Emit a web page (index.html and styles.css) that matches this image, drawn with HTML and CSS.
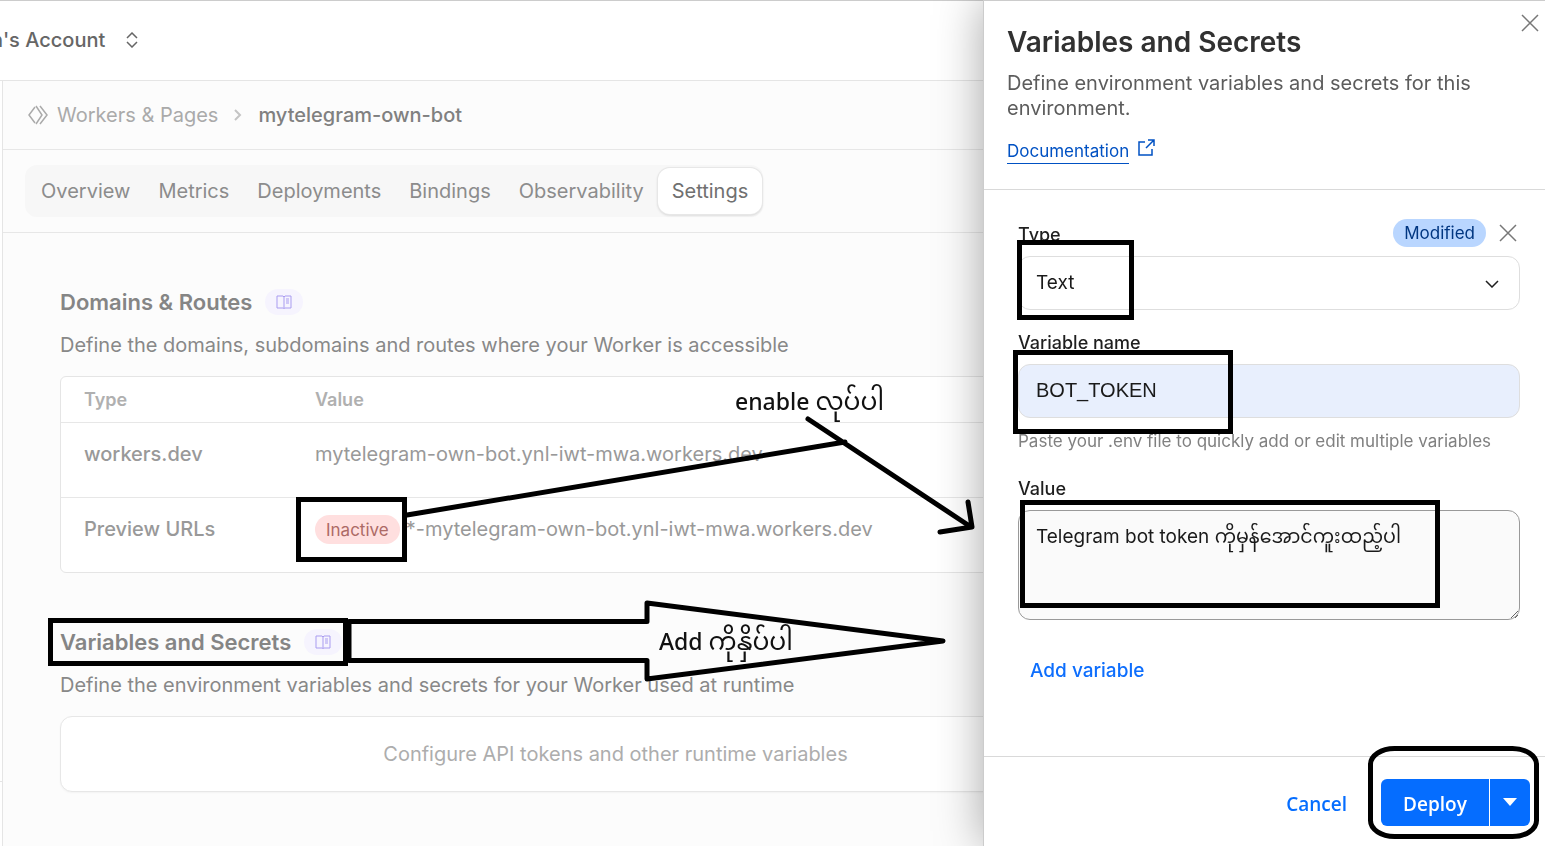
FILE: index.html
```html
<!DOCTYPE html>
<html lang="en">
<head>
    <meta charset="utf-8">
    <title>Variables and Secrets</title>
    <link rel="stylesheet" href="styles.css">
</head>
<body>
    <div class="page">
        <header class="topbar">
            <button class="account">n's Account
                <svg width="14" height="16" viewBox="0 0 14 16"><path d="M2 6l5-5 5 5M2 10l5 5 5-5"/></svg>
            </button>
        </header>

        <div class="shell">
            <aside class="sidebar"><div class="sidebar-foot"></div></aside>
            <main class="main">
                <nav class="breadcrumb">
                    <a href="#">
                        <svg class="workers-icon" width="20" height="20" viewBox="0 0 20 20"><path d="M7 2L1 10l6 8M8 1l6 9-6 9M12 1l7 9-7 9"/></svg>
                        Workers &amp; Pages
                    </a>
                    <svg class="sep" width="8" height="12" viewBox="0 0 8 12"><path d="M1 1l5 5-5 5"/></svg>
                    <span class="current">mytelegram-own-bot</span>
                </nav>

                <div class="tabbar">
                    <nav class="tabs">
                        <a href="#">Overview</a>
                        <a href="#">Metrics</a>
                        <a href="#">Deployments</a>
                        <a href="#">Bindings</a>
                        <a href="#">Observability</a>
                        <a href="#" class="active">Settings</a>
                    </nav>
                </div>

                <div class="content">
                    <section>
                        <h2>Domains &amp; Routes
                            <a class="docs" href="#" aria-label="Docs"><svg width="16" height="14" viewBox="0 0 16 14"><path d="M8 2v11M8 2L7 1H1v12h6l1 .5 1-.5h6V1H9zM10 4h3M10 6h3M10 8h3"/></svg></a>
                        </h2>
                        <p class="desc">Define the domains, subdomains and routes where your Worker is accessible</p>
                        <table>
                            <thead>
                                <tr><th>Type</th><th>Value</th></tr>
                            </thead>
                            <tbody>
                                <tr><td class="type">workers.dev</td><td>mytelegram-own-bot.ynl-iwt-mwa.workers.dev</td></tr>
                                <tr><td class="type">Preview URLs</td><td><span class="inactive">Inactive</span>*-mytelegram-own-bot.ynl-iwt-mwa.workers.dev</td></tr>
                            </tbody>
                        </table>
                    </section>

                    <section>
                        <h2>Variables and Secrets
                            <a class="docs" href="#" aria-label="Docs"><svg width="16" height="14" viewBox="0 0 16 14"><path d="M8 2v11M8 2L7 1H1v12h6l1 .5 1-.5h6V1H9zM10 4h3M10 6h3M10 8h3"/></svg></a>
                        </h2>
                        <p class="desc">Define the environment variables and secrets for your Worker used at runtime</p>
                        <div class="empty">Configure API tokens and other runtime variables</div>
                    </section>
                </div>
            </main>
        </div>
    </div>

    <aside class="drawer">
        <div class="drawer-head">
            <h1>Variables and Secrets</h1>
            <p>Define environment variables and secrets for this environment.</p>
            <a class="doc-link" href="#"><span>Documentation</span>
                <svg width="18" height="18" viewBox="0 0 18 18"><path d="M8 3H2v13h13v-6M11 1h6v6M17 1L9 9"/></svg>
            </a>
            <button class="close drawer-close" aria-label="Close">
                <svg width="18" height="18" viewBox="0 0 18 18"><path d="M1 1l16 16M17 1L1 17"/></svg>
            </button>
        </div>

        <form class="drawer-body">
            <div class="field">
                <div class="label-row">
                    <label for="type">Type</label>
                    <span class="modified">Modified</span>
                    <button type="button" class="close" aria-label="Remove">
                        <svg width="18" height="18" viewBox="0 0 18 18"><path d="M1 1l16 16M17 1L1 17"/></svg>
                    </button>
                </div>
                <div class="select-wrap">
                    <select id="type">
                        <option>Text</option>
                        <option>Secret</option>
                        <option>JSON</option>
                    </select>
                    <svg width="14" height="8" viewBox="0 0 14 8"><path d="M1 1l6 6 6-6"/></svg>
                </div>
            </div>
            <div class="field">
                <label for="name">Variable name</label>
                <input id="name" type="text" value="BOT_TOKEN">
                <p class="hint">Paste your .env file to quickly add or edit multiple variables</p>
            </div>
            <div class="field">
                <label for="value">Value</label>
                <textarea id="value">Telegram bot token ကိုမှန်အောင်ကူးထည့်ပါ</textarea>
            </div>
            <button type="button" class="add">Add variable</button>
        </form>

        <div class="drawer-foot">
            <button class="cancel">Cancel</button>
            <div class="split">
                <button class="deploy">Deploy</button>
                <button class="more" aria-label="More deploy options"><svg width="14" height="8" viewBox="0 0 14 8"><path d="M0 0h14L7 8z"/></svg></button>
            </div>
        </div>
    </aside>

    <!-- hand-drawn notes on top of the page -->
    <svg class="notes" width="1545" height="846" viewBox="0 0 1545 846">
        <rect x="298.500" y="499.500" width="106" height="60"/>
        <rect x="50.500" y="620.500" width="295" height="43"/>
        <rect x="1019.500" y="242.500" width="112" height="75"/>
        <rect x="1015.500" y="352.500" width="215" height="79"/>
        <rect x="1022.500" y="502.500" width="415" height="103"/>
        <rect x="1370.500" y="748.500" width="166" height="88" rx="24" ry="16"/>
        <path d="M407 515L845 442M808 419L971 527M968 502l4 25-32 5"/>
        <path d="M349 621.500H647V603L943 641 647 679V660.500H349z"/>
        <text x="735" y="410">enable <tspan class="mm">လုပ်ပါ</tspan></text>
        <text x="659" y="650">Add <tspan class="mm">ကိုနှိပ်ပါ</tspan></text>
    </svg>
</body>
</html>
```

FILE: styles.css
```css
* {
    box-sizing: border-box;
}

body {
    margin: 0;
    height: 100vh;
    overflow: hidden;
    font-family: Inter, "Liberation Sans", sans-serif;
    font-size: 20px;
    line-height: 26px;
    color: #888;
    background: #fff;
}

h1, h2, p {
    margin: 0;
}

a {
    color: inherit;
    text-decoration: none;
}

button {
    font: inherit;
    padding: 0;
    border: none;
    background: none;
    cursor: pointer;
}

svg {
    fill: none;
    stroke: currentColor;
    flex-shrink: 0;
}

/* page behind the drawer */
.page {
    height: 100%;
    display: flex;
    flex-direction: column;
    border-top: 1px solid #ccc;
}

.topbar {
    height: 80px;
    display: flex;
    align-items: center;
    padding-bottom: 2px;
    border-bottom: 1px solid #e5e5e5;
}

.account {
    display: flex;
    align-items: center;
    gap: 20px;
    margin-left: -9px;
    font-weight: 500;
    color: #666;
}

.account svg {
    stroke-width: 1.5;
}

.shell {
    flex: 1;
    display: flex;
    min-height: 0;
}

.sidebar {
    width: 3px;
    display: flex;
    align-items: flex-end;
    border-right: 1px solid #e5e5e5;
}

.sidebar-foot {
    width: 100%;
    height: 65px;
    border-top: 1px solid #e5e5e5;
}

.main {
    flex: 1;
    background: #fcfcfc;
}

.breadcrumb {
    height: 69px;
    display: flex;
    align-items: center;
    gap: 16px;
    padding-left: 25px;
    border-bottom: 1px solid #e7e7e7;
    color: #aaa;
}

.breadcrumb a {
    display: flex;
    align-items: center;
    gap: 9px;
}

.workers-icon {
    stroke-width: 1.5;
}

.sep {
    stroke-width: 2;
    color: #c4c4c4;
}

.current {
    font-weight: 500;
    color: #808080;
}

.tabbar {
    padding: 15px 22px;
    border-bottom: 1px solid #e7e7e7;
}

.tabs {
    display: inline-flex;
    align-items: center;
    height: 52px;
    padding: 0 1px;
    border-radius: 12px;
    background: #f7f7f7;
    vertical-align: top;
}

.tabs a {
    padding: 10px 14px;
    color: #8c8c8c;
}

.tabs a:first-child {
    padding-left: 15px;
}

.tabs .active {
    border-radius: 12px;
    background: #fff;
    color: #707070;
    box-shadow: 0 0 0 1px #e7e7e7, 0 1px 3px rgba(0, 0, 0, 0.2);
}

.content {
    max-width: 1225px;
    padding: 54px 57px 0;
}

section + section {
    margin-top: 54px;
}

h2 {
    display: flex;
    align-items: center;
    gap: 13px;
    height: 30px;
    font-size: 22px;
    font-weight: 600;
    color: #858585;
}

.docs {
    display: flex;
    align-items: center;
    justify-content: center;
    width: 38px;
    height: 26px;
    border-radius: 13px;
    background: #f6f4fe;
    color: #a99cf0;
}

.desc {
    margin: 15px 0 18px;
}

table {
    width: 100%;
    border: 1px solid #e5e5e5;
    border-radius: 6px;
    border-spacing: 0;
    background: #fff;
}

th, td {
    padding: 0 23px;
    text-align: left;
}

th:first-child {
    width: 254px;
}

th {
    height: 45px;
    font-size: 18px;
    font-weight: 600;
    color: #b0b0b0;
}

td {
    height: 75px;
    padding-bottom: 12px;
    border-top: 1px solid #e7e7e7;
    color: #999;
}

td.type {
    font-weight: 500;
}

th + th, td + td {
    padding-left: 0;
}

.inactive {
    display: inline-block;
    margin-right: 6px;
    padding: 2px 11px 1px;
    border-radius: 15px;
    font-size: 17px;
    background: #ffdfdf;
    color: #ad6a66;
}

.empty {
    height: 76px;
    display: flex;
    align-items: center;
    justify-content: center;
    border: 1px solid #e7e7e7;
    border-radius: 12px;
    background: #fff;
    color: #adadad;
    box-shadow: 0 1px 2px rgba(0, 0, 0, 0.04);
}

/* drawer */
.drawer {
    position: fixed;
    top: 0;
    right: 0;
    bottom: 0;
    width: 562px;
    display: flex;
    flex-direction: column;
    border-top: 1px solid #ccc;
    border-left: 1px solid #ccc;
    background: #fff;
    box-shadow: 0 0 44px rgba(0, 0, 0, 0.35);
}

.drawer-head {
    position: relative;
    height: 189px;
    padding: 23px 60px 0 23px;
    border-bottom: 1px solid #d9d9d9;
    color: #5c5c5c;
}

.drawer-head h1 {
    font-size: 28px;
    font-weight: 600;
    line-height: 36px;
    color: #313131;
}

.drawer-head p {
    margin: 11px 0 18px;
    line-height: 25px;
}

.doc-link {
    display: flex;
    align-items: flex-start;
    gap: 8px;
    font-size: 17px;
    color: #0051c3;
}

.doc-link span {
    border-bottom: 1px solid #0051c3;
    line-height: 24px;
}

.doc-link svg {
    stroke-width: 1.5;
}

.close {
    display: flex;
    color: #777;
}

.close svg {
    stroke-width: 1.5;
}

.drawer-close {
    position: absolute;
    top: 13px;
    right: 6px;
}

.drawer-body {
    flex: 1;
    padding: 29px 25px 0 34px;
    font-size: 18px;
    color: #1f1f1f;
}

.field {
    margin-bottom: 22px;
}

.field label {
    display: block;
    height: 34px;
    line-height: 26px;
    font-weight: 500;
}

.label-row {
    display: flex;
    align-items: flex-start;
    gap: 13px;
    height: 37px;
}

.field .label-row label {
    flex: 1;
    line-height: 32px;
}

.label-row .close {
    margin: 5px 3px 0 0;
}

.modified {
    height: 28px;
    padding: 0 11px;
    border-radius: 14px;
    font-size: 17px;
    line-height: 28px;
    background: #b9d6ff;
    color: #003681;
}

.select-wrap {
    position: relative;
    margin-bottom: -2px;
}

.select-wrap svg {
    position: absolute;
    top: 24px;
    right: 21px;
    stroke-width: 1.5;
}

select, input, textarea {
    display: block;
    width: 100%;
    height: 54px;
    padding: 0 17px 2px;
    border: 1px solid #dedede;
    border-radius: 12px;
    font-family: Inter, "Noto Sans Myanmar", "Noto Sans", sans-serif;
    font-size: 19px;
    color: #1a1a1a;
    background: #fff;
    appearance: none;
}

input {
    font-family: "Liberation Sans", Arial, sans-serif;
    font-size: 20px;
    background: #e8effd;
}

textarea {
    height: 110px;
    padding: 13px 17px;
    line-height: 26px;
    border-color: #999;
    background: #fafafa;
}

.hint {
    margin-top: 10px;
    font-size: 17px;
    color: #808080;
}

.add {
    margin: 16px 0 0 12px;
    font-size: 19px;
    font-weight: 500;
    color: #0d6efd;
}

.drawer-foot {
    display: flex;
    align-items: center;
    justify-content: flex-end;
    gap: 34px;
    height: 90px;
    padding: 1px 15px 0 0;
    border-top: 1px solid #d9d9d9;
    font-family: "Open Sans", "Noto Sans", sans-serif;
    font-size: 19px;
    font-weight: 600;
}

.drawer-foot button {
    padding-top: 3px;
}

.cancel {
    color: #056dff;
}

.split {
    display: flex;
    gap: 1px;
    height: 47px;
}

.split button {
    background: #056dff;
    color: #fff;
}

.deploy {
    width: 108px;
    border-radius: 6px 0 0 6px;
}

.more {
    width: 40px;
    border-radius: 0 6px 6px 0;
}

.more svg {
    display: block;
    margin: -4px auto 0;
    fill: #fff;
    stroke: none;
}

/* notes */
.notes {
    position: absolute;
    top: 0;
    left: 0;
    pointer-events: none;
    stroke: #000;
    stroke-width: 5;
    stroke-linecap: round;
    stroke-linejoin: round;
}

.notes rect {
    stroke-linejoin: miter;
}

.notes text {
    fill: #111;
    stroke: none;
    font-family: "Noto Sans", "Noto Sans Myanmar", sans-serif;
    font-size: 23px;
    font-weight: 500;
}

.notes .mm {
    font-size: 25px;
    font-weight: 400;
}
```
